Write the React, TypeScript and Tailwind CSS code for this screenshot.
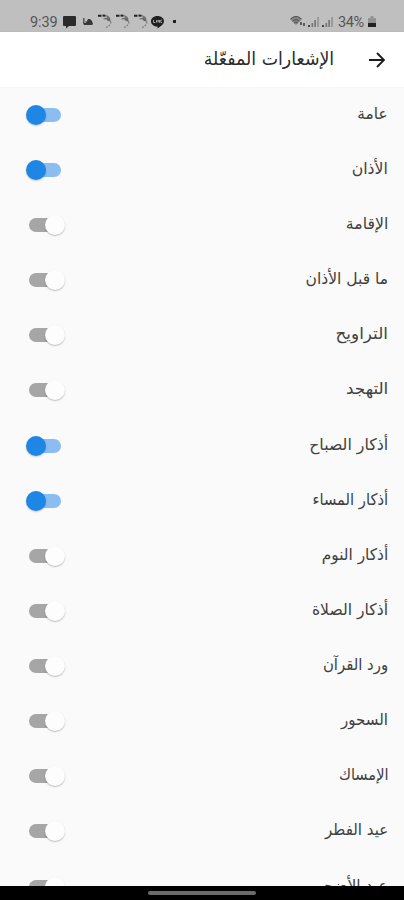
const rows: { label: string; fit: string; on?: boolean }[] = [
  { label: 'عامة', fit: 'scale-x-[0.96]', on: true },
  { label: 'الأذان', fit: 'scale-x-[0.98]', on: true },
  { label: 'الإقامة', fit: 'scale-x-[0.98]' },
  { label: 'ما قبل الأذان', fit: 'scale-x-[0.97]' },
  { label: 'التراويح', fit: 'scale-x-[1.05]' },
  { label: 'التهجد', fit: 'scale-x-[1.05]' },
  { label: 'أذكار الصباح', fit: 'scale-x-[0.985]', on: true },
  { label: 'أذكار المساء', fit: 'scale-x-[0.92]', on: true },
  { label: 'أذكار النوم', fit: 'scale-x-[0.96]' },
  { label: 'أذكار الصلاة', fit: 'scale-x-[0.975]' },
  { label: 'ورد القرآن', fit: 'scale-x-[0.93]' },
  { label: 'السحور', fit: 'scale-x-[0.94]' },
  { label: 'الإمساك', fit: 'scale-x-[0.91]' },
  { label: 'عيد الفطر', fit: 'scale-x-[0.94]' },
  { label: 'عيد الأضحى', fit: 'scale-x-[0.97]' },
];

function Toggle({ on }: { on?: boolean }) {
  return on ? (
    <span className="flex h-[14px] w-[34px] items-center rounded-full bg-[#8bbdf0]">
      <span className="-ml-[1px] size-5 shrink-0 rounded-full bg-[#1e86e5] shadow-[0_1px_2px_rgba(0,0,0,0.2)]" />
    </span>
  ) : (
    <span className="ml-[2px] flex h-[14px] w-[34px] items-center justify-end rounded-full bg-[#a6a6a6]">
      <span className="-mr-[2px] size-5 shrink-0 rounded-full bg-[#fdfdfd] shadow-[0_1px_1.5px_rgba(0,0,0,0.25)]" />
    </span>
  );
}

function Swirl() {
  return (
    <svg width="14" height="16" viewBox="0 0 14 16" fill="none">
      <path d="M0 2.800h3.500M4.500 2.500l3 .3" stroke="#222" strokeWidth="2" />
      <path d="M7 2.500c3 .5 4.500 2 5 4M5.500 6l3-.5 2 2.500M9 4.500l3.500 4" stroke="#666" strokeWidth="1.200" />
      <path d="M12.800 8.500c.3 2-1.300 4.500-4.800 6" stroke="#808080" strokeWidth="1.300" strokeDasharray="2 1.200" />
    </svg>
  );
}

function Signal() {
  return (
    <svg width="13" height="12" viewBox="0 0 13 12">
      <path d="M1 9h2v2H1z" fill="#444" />
      <path d="M4.500 7h1.700v4H4.500z" fill="#777" />
      <path d="M7.300 4h1.700v7H7.300z" fill="#777" />
      <path d="M10.200 1h1.700v10h-1.700z" fill="#959595" />
    </svg>
  );
}

function StatusBar() {
  return (
    <div className="flex h-8 shrink-0 items-start bg-[#bfbfbf] pt-[13px] pl-[30px] pr-[28px] font-['Roboto',sans-serif] text-[#555]">
      <span className="w-[27px] text-[14.5px] leading-[19px] tracking-[-0.1px]">9:39</span>
      <svg className="mt-[3px] ml-[6px]" width="13" height="13" viewBox="0 0 13 13" fill="#2b2b2b">
        <path d="M1 0h11q1 0 1 1v8q0 1-1 1H6L3 12.500V10H1Q0 10 0 9V1Q0 0 1 0z" />
      </svg>
      <svg className="mt-[4px] ml-[7px]" width="10" height="9" viewBox="0 0 10 9">
        <path d="M0 1h1.500v5H0zM2.500 4h1v2h-1z" fill="#555" />
        <path d="M0 6h3l2-4h2l2 2 1 3-1 1H1z" fill="#383838" />
      </svg>
      <div className="ml-[5px] flex gap-[4px]">
        <Swirl />
        <Swirl />
        <Swirl />
      </div>
      <svg className="mt-[3px] ml-[3px]" width="13" height="13" viewBox="0 0 13 13">
        <path d="M6.500 0C10 0 13 2.200 13 5.200c0 3-3.500 5-6.500 7.300v-2C3 10.500 0 8.400 0 5.200 0 2.200 3 0 6.500 0z" fill="#1f1f1f" />
        <path d="M2.500 4v2.500h2M5.500 4v2.500M7 6.500V4l1.500 2.500V4M11 4H9.800v2.500H11" stroke="#bbb" strokeWidth=".8" fill="none" />
      </svg>
      <span className="mt-[7px] ml-[9px] size-[3px] bg-[#222]" />
      <div className="ml-auto flex items-start">
        <svg className="mt-[2px]" width="17" height="13" viewBox="0 0 17 13">
          <path d="M0 4Q6 -2 12 4L6 10z" fill="#858585" />
          <path d="M.5 4Q6 -1 11.500 4M2.500 6Q6 3 9.500 6M4 8q2-1.500 4 0" stroke="#505050" fill="none" />
          <path d="M11 7v3M14 8v3" stroke="#444" strokeWidth="1.600" />
        </svg>
        <div className="mt-[3px] flex gap-[1px]">
          <Signal />
          <Signal />
        </div>
        <span className="ml-[4px] w-[28px] text-[14.5px] leading-[19px] tracking-[-0.4px]">34%</span>
        <svg className="mt-[3px] ml-[2px]" width="8" height="12" viewBox="0 0 8 12">
          <path d="M2.500 0h3v2H8v5H0V2h2.500z" fill="#929292" />
          <path d="M0 7h8v4H0z" fill="#222" />
        </svg>
      </div>
    </div>
  );
}

export default function App() {
  return (
    <div className="flex h-[900px] w-[404px] flex-col overflow-hidden bg-[#fafafa] font-['DejaVu_Sans',sans-serif]">
      <StatusBar />
      <header dir="rtl" className="flex h-[55px] shrink-0 items-center bg-white pr-[19px] shadow-[0_0_1px_rgba(0,0,0,0.08)]">
        <svg width="16" height="16" viewBox="0 0 16 16" fill="none" stroke="#1b1b1b" strokeWidth="1.800">
          <path d="M0 8h14.500M8 1l7 7-7 7" />
        </svg>
        <h1 className="mr-[35px] mb-[2px] origin-right scale-x-[0.965] text-[18px] leading-6 whitespace-nowrap text-[#2b2b2b]">الإشعارات المفعّلة</h1>
      </header>
      <main className="min-h-0 flex-1 overflow-hidden">
        {rows.map((row) => (
          <div key={row.label} className="flex h-[55.14px] items-center justify-between pt-[0.4px] pr-4 pl-[27px]">
            <Toggle on={row.on} />
            <span dir="rtl" className={`mb-[2px] origin-right text-[16px] leading-6 whitespace-nowrap text-[#404040] ${row.fit}`}>{row.label}</span>
          </div>
        ))}
      </main>
      <footer className="flex h-[14px] shrink-0 items-center justify-center bg-black">
        <div className="h-[4px] w-[108px] rounded-full bg-[#6b6b6b]" />
      </footer>
    </div>
  );
}
